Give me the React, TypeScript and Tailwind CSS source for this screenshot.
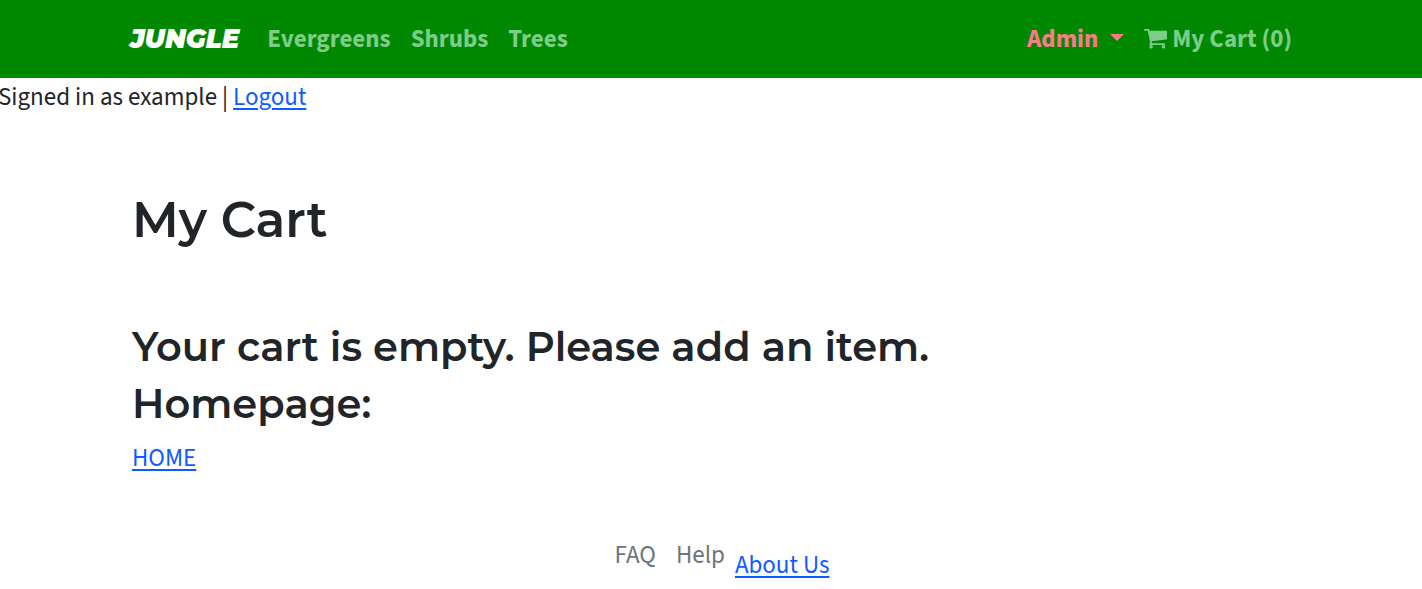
import React from "react";

const navLink = "text-[#7ccd88] hover:text-white";
const link =
  "text-[#0d5cff] underline decoration-2 underline-offset-3";

function CartIcon() {
  return (
    <svg viewBox="0 256 1664 1408" className="w-[23px]" fill="currentColor" aria-hidden="true">
      <path d="M640 1536q0 52-38 90t-90 38-90-38-38-90 38-90 90-38 90 38 38 90zm896 0q0 52-38 90t-90 38-90-38-38-90 38-90 90-38 90 38 38 90zm128-1088v512q0 24-16.500 42.500t-40.500 21.500l-1044 122q13 60 13 70 0 16-24 64h920q26 0 45 19t19 45-19 45-45 19h-1024q-26 0-45-19t-19-45q0-11 8-31.500t16-36 21.500-40 15.500-29.500l-177-823h-204q-26 0-45-19t-19-45 19-45 45-19h256q16 0 28.500 6.500t19.500 15.500 13 24.500 8 26 5.500 29.500 4.500 26h1201q26 0 45 19t19 45z" />
    </svg>
  );
}

export default function App() {
  return (
    <div className="min-h-screen overflow-x-hidden bg-white font-['Source_Sans_Pro','Source_Sans_3','Noto_Sans_CJK_SC',sans-serif] text-[25px] leading-[38px] text-[#212529]">
      <nav className="bg-[#008800]">
        <div className="mx-auto flex h-[78px] max-w-[1162px] items-center font-bold">
          <a href="#" className="mr-7 font-['Montserrat','Inter',sans-serif] text-[26px] font-black italic text-white">
            JUNGLE
          </a>
          <div className="flex gap-5">
            <a href="#" className={navLink}>Evergreens</a>
            <a href="#" className={navLink}>Shrubs</a>
            <a href="#" className={navLink}>Trees</a>
          </div>
          <div className="ml-auto flex items-center gap-5">
            <button type="button" className="flex items-center gap-3 text-[#ff7b86]">
              Admin
              <svg viewBox="0 0 14 7" className="mb-1 w-[14px]" fill="currentColor" aria-hidden="true">
                <path d="M0 0h14L7 7z" />
              </svg>
            </button>
            <a href="#" className="flex items-center gap-[5px] text-[#7ccd88]">
              <CartIcon />
              My Cart (0)
            </a>
          </div>
        </div>
      </nav>
      <p className="-ml-0.5">
        Signed in as example | <a href="#" className={link}>Logout</a>
      </p>
      <main className="mx-auto max-w-[1158px] pt-[70px]">
        <div className="font-['Montserrat','Inter',sans-serif] font-semibold">
          <h1 className="text-[49px] leading-[68px]">My Cart</h1>
          <div className="pt-16 text-[40px] leading-[57px]">
            <h2>Your cart is empty. Please add an item.</h2>
            <h2>Homepage:</h2>
          </div>
        </div>
        <p className="mt-[7px]">
          <a href="#" className={link}>HOME</a>
        </p>
      </main>
      <footer className="mt-[59px] flex justify-center pl-[22px] text-[#6c757d]">
        <a href="#" className="mr-5">FAQ</a>
        <a href="#" className="mr-2.5">Help</a>
        <a href="#" className={`mt-2.5 ${link}`}>About Us</a>
      </footer>
    </div>
  );
}
